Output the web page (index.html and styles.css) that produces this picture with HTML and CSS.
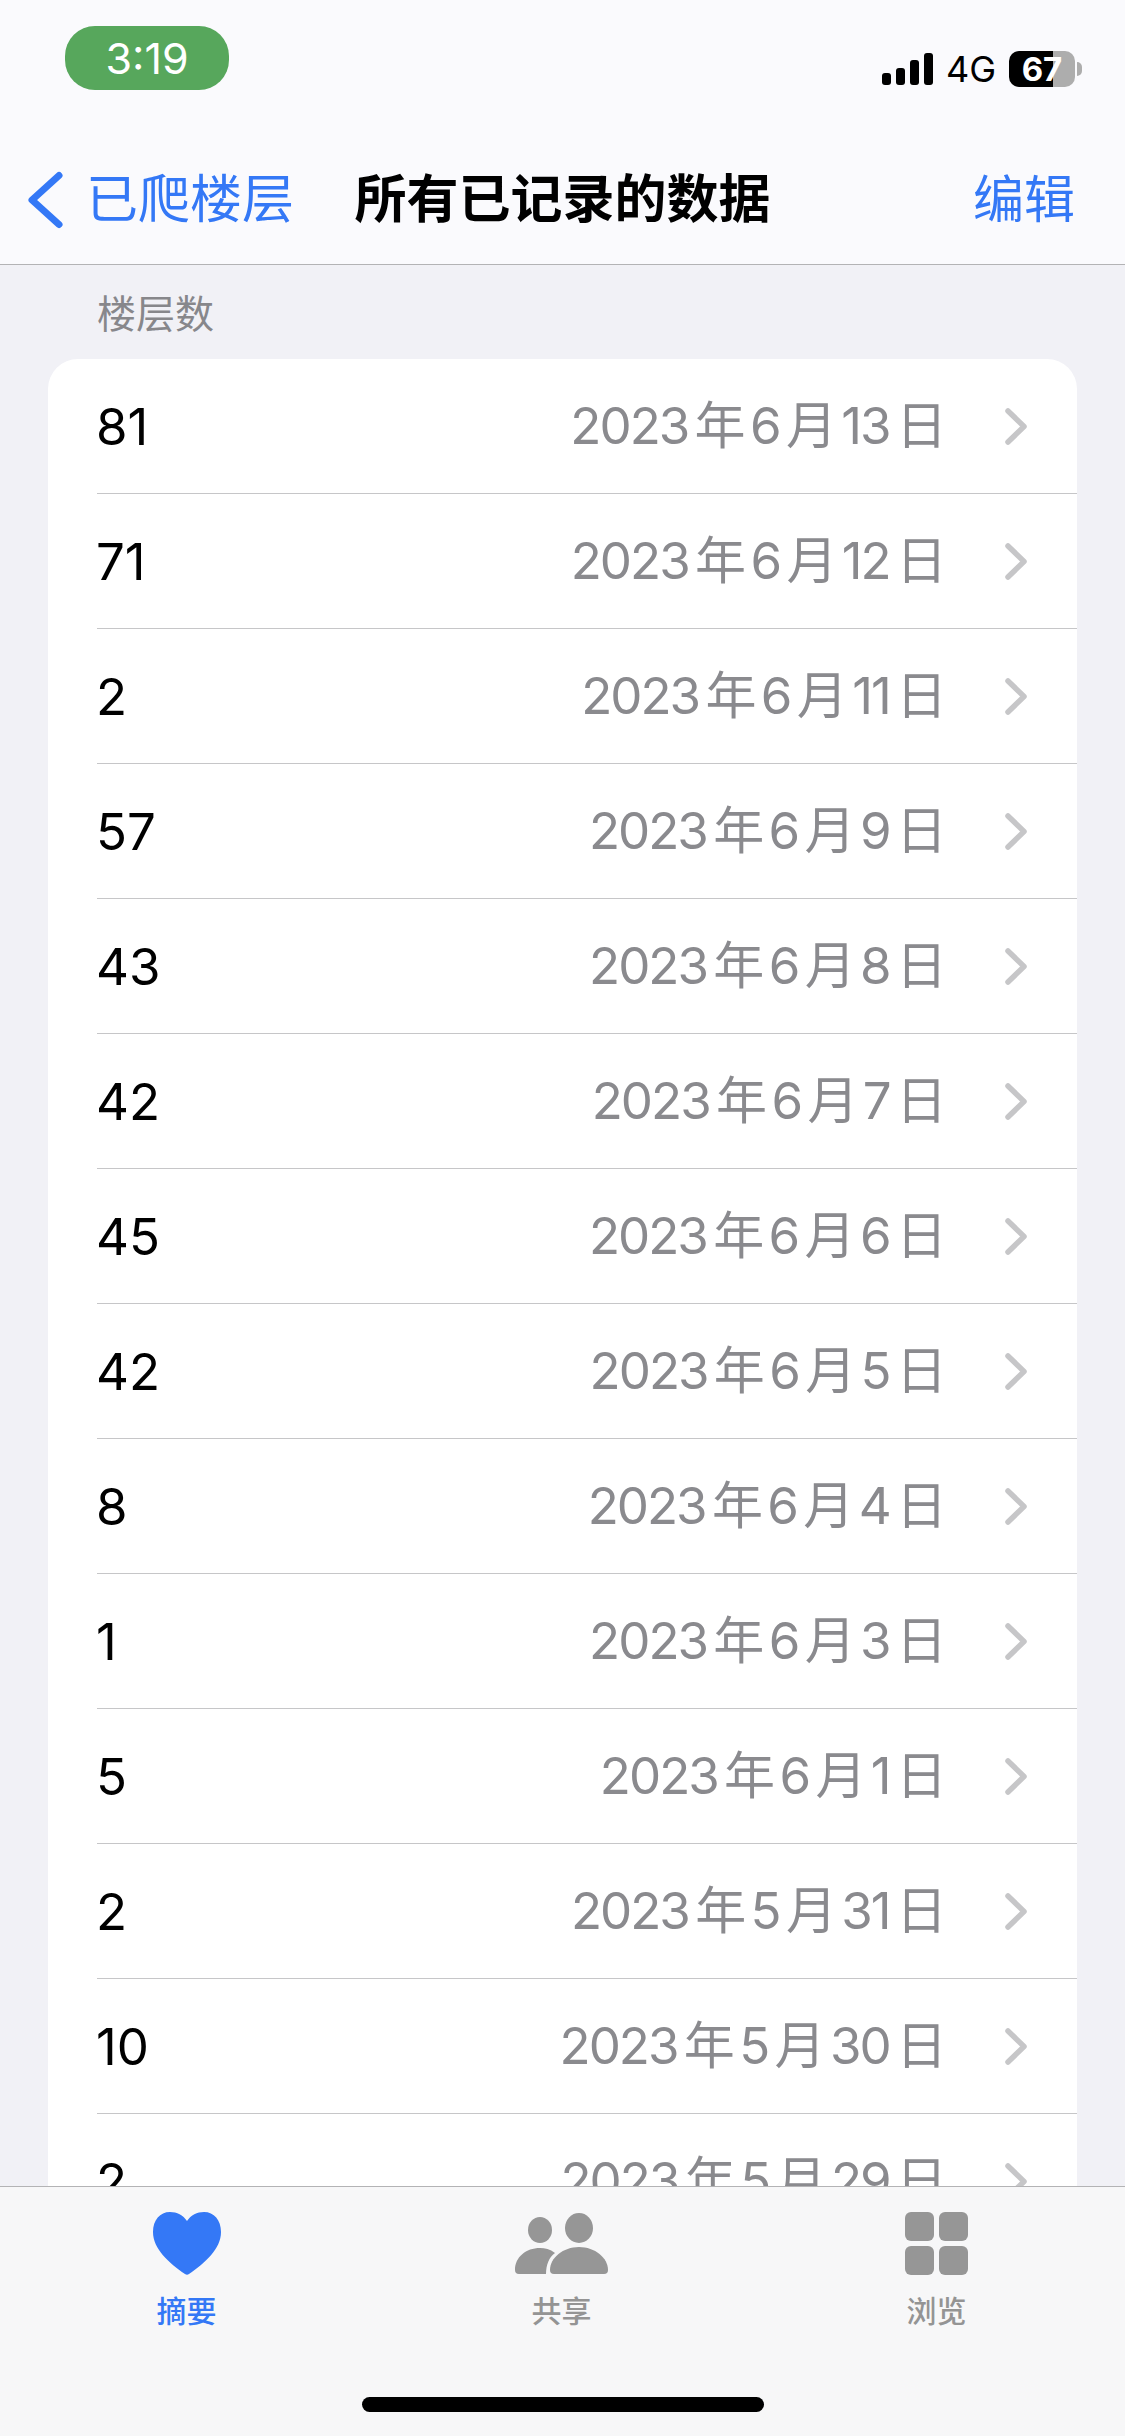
FILE: index.html
```html
<!DOCTYPE html>
<html lang="zh-CN">
<head>
<meta charset="utf-8">
<title>所有已记录的数据</title>
<link rel="stylesheet" href="styles.css">
</head>
<body>
<div class="screen">
  <header class="top">
    <div class="status">
      <div class="time">3:19</div>
      <div class="indicators">
        <svg class="signal" viewBox="0 0 51 32"><rect x="0" y="20" width="9" height="12" rx="3"/><rect x="14" y="15" width="9" height="17" rx="3"/><rect x="28" y="7" width="9" height="25" rx="3"/><rect x="42" y="0" width="9" height="32" rx="3"/></svg>
        <span class="net">4G</span>
        <div class="battery"><span>67</span></div>
        <div class="nub"></div>
      </div>
    </div>
    <nav class="nav">
      <div class="back">
        <svg class="back-icon" viewBox="0 0 36 58"><polyline points="31,4.500 4,29 31,53.500"/></svg>
        <span>已爬楼层</span>
      </div>
      <h1 class="title">所有已记录的数据</h1>
      <div class="edit">编辑</div>
    </nav>
  </header>
  <main class="content">
    <div class="section">楼层数</div>
    <div class="card">
      <div class="row"><span class="num">81</span><span class="date">2023年6月13日</span><svg class="chev" viewBox="0 0 22 37"><polyline points="3,3 19,18.500 3,34"/></svg></div>
      <div class="row"><span class="num">71</span><span class="date">2023年6月12日</span><svg class="chev" viewBox="0 0 22 37"><polyline points="3,3 19,18.500 3,34"/></svg></div>
      <div class="row"><span class="num">2</span><span class="date">2023年6月11日</span><svg class="chev" viewBox="0 0 22 37"><polyline points="3,3 19,18.500 3,34"/></svg></div>
      <div class="row"><span class="num">57</span><span class="date">2023年6月9日</span><svg class="chev" viewBox="0 0 22 37"><polyline points="3,3 19,18.500 3,34"/></svg></div>
      <div class="row"><span class="num">43</span><span class="date">2023年6月8日</span><svg class="chev" viewBox="0 0 22 37"><polyline points="3,3 19,18.500 3,34"/></svg></div>
      <div class="row"><span class="num">42</span><span class="date">2023年6月7日</span><svg class="chev" viewBox="0 0 22 37"><polyline points="3,3 19,18.500 3,34"/></svg></div>
      <div class="row"><span class="num">45</span><span class="date">2023年6月6日</span><svg class="chev" viewBox="0 0 22 37"><polyline points="3,3 19,18.500 3,34"/></svg></div>
      <div class="row"><span class="num">42</span><span class="date">2023年6月5日</span><svg class="chev" viewBox="0 0 22 37"><polyline points="3,3 19,18.500 3,34"/></svg></div>
      <div class="row"><span class="num">8</span><span class="date">2023年6月4日</span><svg class="chev" viewBox="0 0 22 37"><polyline points="3,3 19,18.500 3,34"/></svg></div>
      <div class="row"><span class="num">1</span><span class="date">2023年6月3日</span><svg class="chev" viewBox="0 0 22 37"><polyline points="3,3 19,18.500 3,34"/></svg></div>
      <div class="row"><span class="num">5</span><span class="date">2023年6月1日</span><svg class="chev" viewBox="0 0 22 37"><polyline points="3,3 19,18.500 3,34"/></svg></div>
      <div class="row"><span class="num">2</span><span class="date">2023年5月31日</span><svg class="chev" viewBox="0 0 22 37"><polyline points="3,3 19,18.500 3,34"/></svg></div>
      <div class="row"><span class="num">10</span><span class="date">2023年5月30日</span><svg class="chev" viewBox="0 0 22 37"><polyline points="3,3 19,18.500 3,34"/></svg></div>
      <div class="row"><span class="num">2</span><span class="date">2023年5月29日</span><svg class="chev" viewBox="0 0 22 37"><polyline points="3,3 19,18.500 3,34"/></svg></div>
    </div>
  </main>
  <footer class="tabbar">
    <div class="tabs">
      <div class="tab active">
        <svg class="tab-icon heart" viewBox="0 0 68 63"><path d="M34 9C38 3 44 0 51 0C61 0 68 8 68 20C68 37 52 51 36 62Q34 63.500 32 62C16 51 0 37 0 20C0 8 7 0 17 0C24 0 30 3 34 9Z"/></svg>
        <span class="tab-label">摘要</span>
      </div>
      <div class="tab">
        <svg class="tab-icon people" viewBox="0 0 93 63"><ellipse cx="25" cy="18" rx="12" ry="13"/><ellipse cx="64" cy="16" rx="14" ry="15"/><path d="M4 62Q0 62 0 58C0 45 11 36 25 36C30 36 35 37 40 41C34 45 31 53 31 62Z"/><path d="M39 62Q35 62 35 58C35 46 48 35 64 35C80 35 93 46 93 58Q93 62 89 62Z"/></svg>
        <span class="tab-label">共享</span>
      </div>
      <div class="tab">
        <svg class="tab-icon grid" viewBox="0 0 63 63"><rect x="0" y="0" width="29" height="29" rx="6"/><rect x="34" y="0" width="29" height="29" rx="6"/><rect x="0" y="34" width="29" height="29" rx="6"/><rect x="34" y="34" width="29" height="29" rx="6"/></svg>
        <span class="tab-label">浏览</span>
      </div>
    </div>
    <div class="home"></div>
  </footer>
</div>
</body>
</html>
```

FILE: styles.css
```css
* { box-sizing: border-box; }
html, body { margin: 0; padding: 0; }
body {
  width: 1125px;
  height: 2436px;
  overflow: hidden;
  font-family: Inter, "Noto Sans CJK SC", sans-serif;
  text-autospace: normal;
  background: #f1f1f6;
}
.screen {
  width: 1125px;
  height: 2436px;
  display: flex;
  flex-direction: column;
}
.top {
  background: #fafafd;
  border-bottom: 1px solid #b3b3b5;
  height: 265px;
  flex: none;
}
.status {
  height: 132px;
  padding: 26px 43px 0 65px;
  display: flex;
  justify-content: space-between;
  align-items: flex-start;
}
.time {
  width: 164px;
  height: 64px;
  border-radius: 30px;
  background: #57a75c;
  color: #fff;
  font-size: 43px;
  line-height: 64px;
  text-align: center;
}
.indicators {
  display: flex;
  align-items: center;
  margin-top: 25px;
  height: 36px;
}
.signal {
  width: 51px;
  height: 32px;
  fill: #000;
  margin-right: 13px;
}
.net {
  font-size: 36px;
  line-height: 36px;
  color: #000;
  width: 49px;
  margin-right: 14px;
  white-space: nowrap;
}
.battery {
  width: 66px;
  height: 36px;
  border-radius: 10px;
  background: linear-gradient(90deg, #000 0, #000 44px, #adadad 44px, #adadad 100%);
  color: #fff;
  font-size: 33px;
  font-weight: 700;
  line-height: 36px;
  text-align: center;
}
.nub {
  width: 5px;
  height: 14px;
  margin-left: 2px;
  background: #adadad;
  border-radius: 0 7px 7px 0;
}
.nav {
  height: 132px;
  padding: 4px 28px 0;
  display: grid;
  grid-template-columns: 1fr auto 1fr;
  align-items: center;
}
.back {
  display: flex;
  align-items: center;
  color: #3478f6;
  font-size: 52px;
  line-height: 60px;
}
.back-icon {
  width: 36px;
  height: 58px;
  margin-right: 22px;
  fill: none;
  stroke: #3478f6;
  stroke-width: 7;
  stroke-linecap: round;
  stroke-linejoin: round;
}
.title {
  margin: 0;
  font-size: 52px;
  line-height: 60px;
  font-weight: 700;
  color: #000;
}
.edit {
  justify-self: end;
  margin-right: 22px;
  color: #3478f6;
  font-size: 51px;
  line-height: 60px;
}
.content {
  flex: 1;
  min-height: 0;
  overflow: hidden;
}
.section {
  height: 94px;
  padding: 27px 0 0 97px;
  font-size: 39px;
  line-height: 44px;
  color: #87878b;
}
.card {
  margin: 0 48px;
  background: #fff;
  border-radius: 30px;
  overflow: hidden;
}
.row {
  height: 135px;
  margin-left: 49px;
  padding-right: 50px;
  border-bottom: 1px solid #c6c6c8;
  display: flex;
  align-items: center;
}
.num {
  font-size: 51px;
  line-height: 60px;
  color: #000;
  margin: 2px 0 0 -1px;
}
.date {
  margin: 0 0 0 auto;
  font-size: 51px;
  line-height: 60px;
  color: #8a8a8e;
  letter-spacing: -2px;
}
.chev {
  width: 22px;
  height: 37px;
  margin-left: 60px;
  flex: none;
  fill: none;
  stroke: #c6c6c8;
  stroke-width: 5.500;
  stroke-linecap: round;
  stroke-linejoin: round;
}
.tabbar {
  height: 250px;
  flex: none;
  background: #f7f7f8;
  border-top: 1px solid #b3b3b5;
}
.tabs {
  display: grid;
  grid-template-columns: repeat(3, 375px);
  margin-left: -1px;
  padding-top: 25px;
}
.tab {
  display: flex;
  flex-direction: column;
  align-items: center;
  color: #949494;
}
.tab.active { color: #3478f6; }
.tab-icon {
  height: 63px;
  fill: #969696;
}
.heart { width: 68px; fill: #3478f6; }
.people { width: 93px; }
.grid { width: 63px; }
.tab-label {
  margin-top: 16px;
  font-size: 30px;
  line-height: 40px;
  font-weight: 500;
}
.home {
  width: 402px;
  height: 15px;
  margin: 66px auto 0;
  background: #000;
  border-radius: 8px;
}
```
